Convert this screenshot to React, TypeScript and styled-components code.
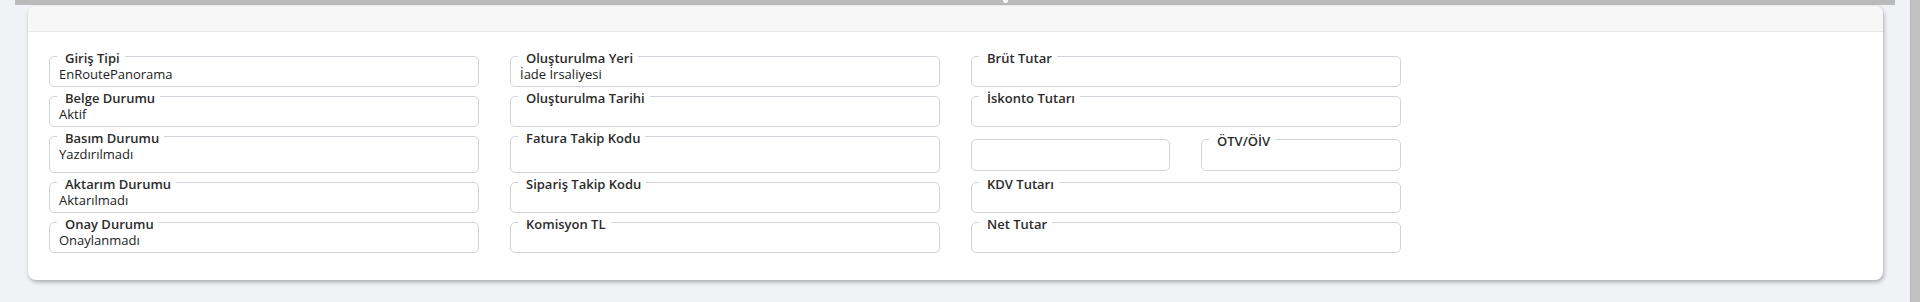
import * as React from "react";
import styled, { createGlobalStyle } from "styled-components";

interface Field {
  label?: string;
  value?: string;
}

const GlobalStyle = createGlobalStyle`
  html, body {
    margin: 0;
    padding: 0;
    background-color: #f0f2f5;
    font-family: "Open Sans", "Noto Sans", sans-serif;
    color: #212529;
  }
`;

const Page = styled.div`
  display: flex;
  height: 302px;
  overflow: hidden;
`;

const Main = styled.main`
  flex: 1;
  display: flex;
  flex-direction: column;
`;

const ScrollTrack = styled.div`
  width: 10px;
  background-color: #c2c2c2;
  border-left: 1px solid #b3b3b3;
  box-sizing: border-box;
`;

const TopStrip = styled.div`
  height: 5px;
  margin: 0 15px;
  background-color: #bababa;
  display: flex;
  justify-content: center;
`;

const StripKnob = styled.span`
  width: 5px;
  height: 3px;
  margin-left: 100px;
  border-radius: 0 0 3px 3px;
  background-color: #ffffff;
`;

const Card = styled.section`
  margin: 1px 27px 0 28px;
  background-color: #ffffff;
  border-radius: 8px;
  overflow: hidden;
  box-shadow: 1px 2px 4px rgba(0, 0, 0, 0.3);
`;

const CardHeader = styled.header`
  height: 25px;
  background-color: #f7f7f7;
  border-bottom: 1px solid #e9e9e9;
`;

const CardBody = styled.div`
  display: grid;
  grid-template-columns: repeat(3, 430px);
  column-gap: 31px;
  row-gap: 1px;
  padding: 16px 0 27px 21px;
`;

const Box = styled.fieldset<{ $tall?: boolean }>`
  margin: 0;
  padding: 1px 11px ${(p) => (p.$tall ? "5px" : "4px")} 9px;
  border: 1px solid #ced4da;
  border-radius: 5px;
  min-width: 0;
`;

const Legend = styled.legend<{ $empty?: boolean }>`
  margin-left: -2px;
  padding: ${(p) => (p.$empty ? "0" : "4px 5px 0 8px")};
  height: ${(p) => (p.$empty ? "17px" : "auto")};
  font-size: 13px;
  font-weight: 600;
  line-height: 13px;
  color: #2b2b2b;
  white-space: nowrap;
`;

const Value = styled.div`
  min-height: 16px;
  font-size: 13px;
  line-height: 16px;
  color: #222222;
  white-space: nowrap;
`;

const SplitCell = styled.div`
  display: grid;
  grid-template-columns: 199px 200px;
  column-gap: 31px;
  padding-top: 3px;
  margin-bottom: 2px;
`;

const FieldBox = ({ label, value, tall }: Field & { tall?: boolean }) => (
  <Box $tall={tall}>
    <Legend $empty={!label}>{label}</Legend>
    <Value>{value}</Value>
  </Box>
);

const rows: Field[][] = [
  [
    { label: "Giriş Tipi", value: "EnRoutePanorama" },
    { label: "Oluşturulma Yeri", value: "İade İrsaliyesi" },
    { label: "Brüt Tutar" },
  ],
  [
    { label: "Belge Durumu", value: "Aktif" },
    { label: "Oluşturulma Tarihi" },
    { label: "İskonto Tutarı" },
  ],
  [
    { label: "Basım Durumu", value: "Yazdırılmadı" },
    { label: "Fatura Takip Kodu" },
  ],
  [
    { label: "Aktarım Durumu", value: "Aktarılmadı" },
    { label: "Sipariş Takip Kodu" },
    { label: "KDV Tutarı" },
  ],
  [
    { label: "Onay Durumu", value: "Onaylanmadı" },
    { label: "Komisyon TL" },
    { label: "Net Tutar" },
  ],
];

const App = () => (
  <Page>
    <GlobalStyle />
    <Main>
      <TopStrip>
        <StripKnob />
      </TopStrip>
      <Card>
        <CardHeader />
        <CardBody>
          {rows.map((row, i) => (
            <React.Fragment key={i}>
              {row.map((f) => (
                <FieldBox key={f.label} label={f.label} value={f.value} />
              ))}
              {i === 2 && (
                <SplitCell>
                  <FieldBox tall />
                  <FieldBox label="ÖTV/ÖİV" tall />
                </SplitCell>
              )}
            </React.Fragment>
          ))}
        </CardBody>
      </Card>
    </Main>
    <ScrollTrack />
  </Page>
);

export default App;
